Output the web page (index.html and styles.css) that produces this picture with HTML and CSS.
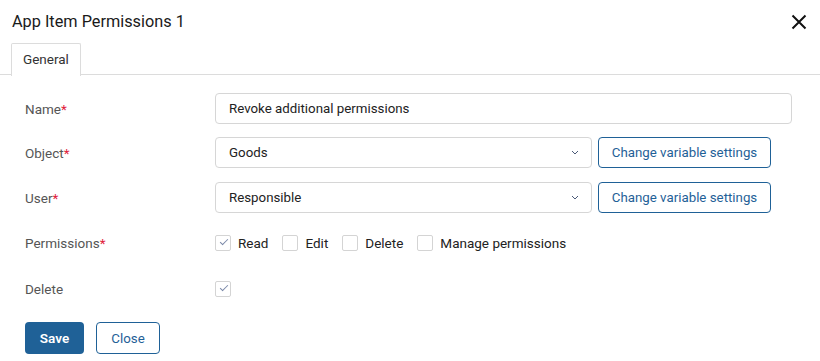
FILE: index.html
```html
<!DOCTYPE html>
<html lang="en">
<head>
<meta charset="UTF-8">
<title>App Item Permissions 1</title>
<link rel="stylesheet" href="styles.css">
</head>
<body>
<div class="dialog">
    <div class="dialog-header">
        <h2 class="dialog-title">App Item Permissions 1</h2>
        <button type="button" class="close-btn" aria-label="Close">
            <svg width="16" height="16" viewBox="0 0 16 16"><path d="M1.5 1.5 L14.5 14.5 M14.5 1.5 L1.5 14.5" stroke="#111" stroke-width="2" fill="none"/></svg>
        </button>
    </div>
    <div class="tabs">
        <div class="tab active">General</div>
    </div>
    <form class="form">
        <div class="row">
            <label class="label">Name<span class="req">*</span></label>
            <div class="field"><div class="input">Revoke additional permissions</div></div>
        </div>
        <div class="row">
            <label class="label">Object<span class="req">*</span></label>
            <div class="field">
                <div class="select">Goods<svg class="chevron" width="8" height="5" viewBox="0 0 8 5"><path d="M1 1 L4 4 L7 1" stroke="#4a5a78" stroke-width="1" fill="none"/></svg></div>
                <button type="button" class="btn-outline">Change variable settings</button>
            </div>
        </div>
        <div class="row">
            <label class="label">User<span class="req">*</span></label>
            <div class="field">
                <div class="select">Responsible<svg class="chevron" width="8" height="5" viewBox="0 0 8 5"><path d="M1 1 L4 4 L7 1" stroke="#4a5a78" stroke-width="1" fill="none"/></svg></div>
                <button type="button" class="btn-outline">Change variable settings</button>
            </div>
        </div>
        <div class="row row-perms">
            <label class="label">Permissions<span class="req">*</span></label>
            <div class="field checks">
                <span class="check"><span class="box checked"></span>Read</span>
                <span class="check"><span class="box"></span>Edit</span>
                <span class="check"><span class="box"></span>Delete</span>
                <span class="check"><span class="box"></span>Manage permissions</span>
            </div>
        </div>
        <div class="row row-delete">
            <label class="label">Delete</label>
            <div class="field checks">
                <span class="check"><span class="box checked"></span></span>
            </div>
        </div>
        <div class="actions">
            <button type="button" class="btn-primary">Save</button>
            <button type="button" class="btn-outline btn-close">Close</button>
        </div>
    </form>
</div>
</body>
</html>
```

FILE: styles.css
```css
body, html {
    margin: 0;
    padding: 0;
    background: #fff;
    font-family: Roboto, 'Liberation Sans', sans-serif;
    color: #222;
}
.dialog {
    width: 820px;
}
.dialog-header {
    display: flex;
    justify-content: space-between;
    align-items: center;
    height: 43px;
    padding: 0 12px 0 12px;
}
.dialog-title {
    margin: 0;
    font-size: 16.3px;
    font-weight: 400;
    color: #1a1a1a;
    padding-bottom: 1px;
}
.close-btn {
    background: none;
    border: none;
    padding: 0;
    width: 16px;
    height: 16px;
    margin-right: 1px;
    cursor: pointer;
}
.tabs {
    display: flex;
    padding-left: 11px;
    border-bottom: 1px solid #dcdcdc;
    height: 31px;
}
.tab {
    border: 1px solid #dcdcdc;
    border-bottom: none;
    border-radius: 2px 2px 0 0;
    background: #fff;
    padding: 0 11px;
    height: 32px;
    line-height: 31px;
    font-size: 13.5px;
    color: #333;
}
.form {
    padding: 18px 28px 0 25px;
}
.row {
    display: grid;
    grid-template-columns: 190px 1fr;
    align-items: center;
    min-height: 31px;
    margin-bottom: 14px;
}
.row:first-child {
    margin-bottom: 13px;
}
.row-perms {
    margin-top: 1px;
}
.row-delete {
    margin-bottom: 18px;
    margin-top: 15px;
}
.label {
    font-size: 13.5px;
    color: #555;
}
.req {
    color: #e0203b;
}
.field {
    display: flex;
    gap: 6px;
    align-items: center;
}
.input, .select {
    box-sizing: border-box;
    height: 31px;
    border: 1px solid #d6d6d6;
    border-radius: 4px;
    font-size: 13.3px;
    color: #222;
    display: flex;
    align-items: center;
    padding-left: 13px;
    flex: 1;
}
.select {
    flex: 0 0 377px;
    padding-left: 13px;
    padding-right: 12px;
    justify-content: space-between;
}
.btn-outline {
    box-sizing: border-box;
    height: 31px;
    background: #fff;
    border: 1px solid #1f6197;
    border-radius: 4px;
    color: #1f6197;
    font-family: inherit;
    font-size: 13.3px;
    padding: 0;
    width: 173px;
    white-space: nowrap;
    cursor: pointer;
}
.checks {
    gap: 0;
}
.check {
    display: inline-flex;
    align-items: center;
    font-size: 13.5px;
    color: #222;
    margin-right: 14px;
}
.box {
    box-sizing: border-box;
    width: 16px;
    height: 16px;
    border: 1px solid #d4d4d4;
    border-radius: 2px;
    margin-right: 7px;
    position: relative;
}
.box.checked::after {
    content: "";
    position: absolute;
    left: 4px;
    top: 3px;
    width: 7px;
    height: 3px;
    border-left: 1px solid #7a88a8;
    border-bottom: 1px solid #7a88a8;
    transform: rotate(-45deg);
}
.actions {
    display: flex;
    gap: 12px;
}
.btn-primary {
    box-sizing: border-box;
    height: 32px;
    width: 59px;
    background: #1f6197;
    border: none;
    border-radius: 4px;
    color: #fff;
    font-family: inherit;
    font-size: 13.5px;
    font-weight: 600;
    cursor: pointer;
}
.btn-close {
    width: 64px;
    height: 32px;
}
```
